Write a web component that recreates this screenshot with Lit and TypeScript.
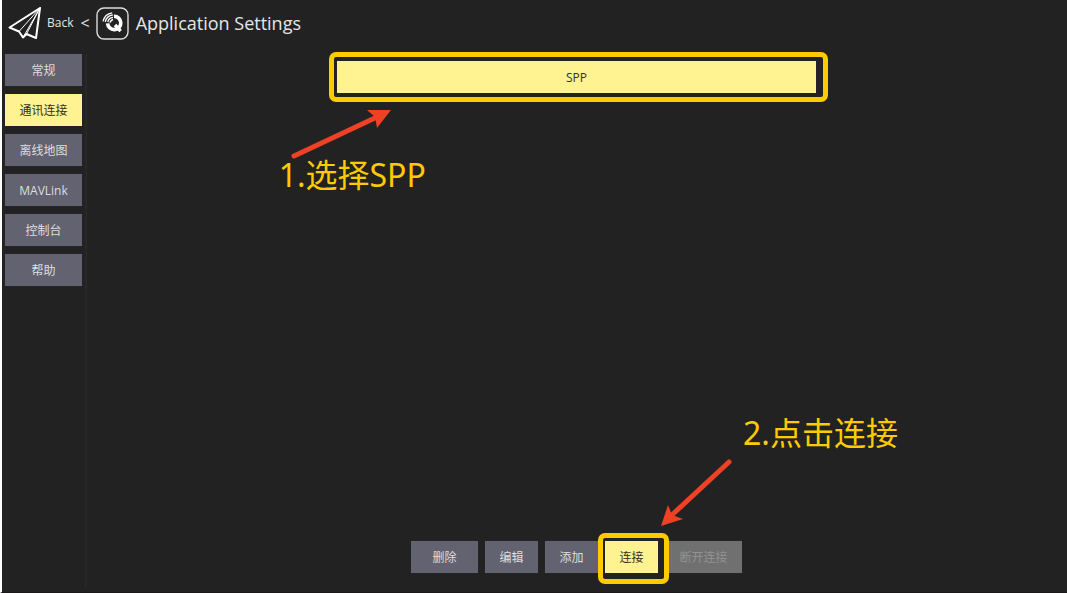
import { LitElement, html, css, svg } from "lit";
import { customElement, state } from "lit/decorators.js";
import { classMap } from "lit/directives/class-map.js";

const PAGES = ["常规", "通讯连接", "离线地图", "MAVLink", "控制台", "帮助"];

const planeIcon = svg`
  <g fill="none" stroke="#fff" stroke-linejoin="round" stroke-linecap="round">
    <path stroke-width="2" d="M32 2 L1.5 21.5 L11 25.5 L15 31.5 L18.5 28 L28 32 Z" />
    <path stroke-width="1" d="M32 2 L11 25.5 M32 2 L15 31.5 M32 2 L18.5 28" />
  </g>`;

const logoIcon = svg`
  <rect x="1" y="1" width="31" height="31" rx="7" fill="none" stroke="#dcdcdc" stroke-width="1.4" />
  <g fill="none" stroke="#fff">
    <path stroke-width="3.6" d="M18 9.4 A6.6 6.6 0 1 1 11.6 16.4" />
    <path stroke-width="3.4" d="M19 18 L24.6 24.2" />
    <path stroke-width="1.3" d="M11.8 15 A6 6 0 0 1 17 10.4 M9.3 14.8 A8.6 8.6 0 0 1 16.8 8 M7 14.4 A11 11 0 0 1 16.2 5.8" />
    <path stroke-width="1.6" d="M14 15.6 A4.4 4.4 0 0 1 17 12.6" />
  </g>`;

@customElement("app-root")
export class AppRoot extends LitElement {
  static styles = css`
    :host {
      display: block;
      font-family: "Open Sans", "Noto Sans CJK SC", sans-serif;
      color: #e6e6e6;
    }
    .window {
      box-sizing: border-box;
      min-height: 100vh;
      display: flex;
      flex-direction: column;
      background: #222;
      border-left: 2px solid #fff;
      border-bottom: 1px solid #1a1819;
      overflow: hidden;
    }
    .toolbar {
      display: flex;
      align-items: center;
      height: 46px;
      padding-left: 6px;
    }
    .back {
      display: flex;
      align-items: center;
      gap: 5px;
      padding: 0;
      border: 0;
      background: none;
      color: inherit;
      font: 12px/16px "Open Sans", sans-serif;
    }
    .chevron {
      font-size: 16px;
      margin: 0 6px 0 2px;
    }
    .title {
      margin: 0 0 0 7px;
      font-size: 18px;
      line-height: 24px;
      font-weight: 400;
    }
    .plane {
      width: 34px;
      height: 34px;
    }
    .logo {
      width: 33px;
      height: 33px;
    }
    .body {
      flex: 1;
      display: flex;
      padding-top: 8px;
    }
    .pages {
      display: flex;
      flex-direction: column;
      gap: 8px;
      width: 77px;
      padding: 0 3px;
      border-right: 2px solid #282828;
      margin-bottom: 5px;
    }
    .btn {
      box-sizing: border-box;
      height: 32px;
      padding: 2px 0 0;
      border: 0;
      background: #636270;
      color: #dededf;
      font: 12px/16px "Open Sans", "Noto Sans CJK SC", sans-serif;
      box-shadow: 0 0 1px #303036;
    }
    .btn.active {
      background: #fff291;
      color: #33301f;
    }
    .btn:disabled {
      background: #707070;
      color: #929292;
    }
    .main {
      flex: 1;
      display: flex;
      flex-direction: column;
      align-items: center;
      justify-content: space-between;
      padding: 7px 1px 19px 0;
    }
    .marked {
      position: relative;
      display: flex;
    }
    .link {
      width: 49%;
    }
    .marked .btn {
      flex: 1;
    }
    .marked::after {
      content: "";
      position: absolute;
      border: 5px solid #ffca00;
      border-radius: 7px;
      pointer-events: none;
    }
    .link::after {
      inset: -9px -12px -9px -8px;
    }
    .connect::after {
      inset: -8px -11px -11px -7px;
      z-index: 1;
    }
    .actions {
      display: flex;
      gap: 7px;
    }
    .w53 {
      width: 53px;
    }
    .w67 {
      width: 67px;
    }
    .w77 {
      width: 77px;
    }
    .note {
      position: absolute;
      margin: 0;
      color: #ffca00;
      font-family: "Noto Sans", "Noto Sans CJK SC", sans-serif;
      font-size: 32px;
      line-height: 40px;
      white-space: nowrap;
    }
    .arrow {
      position: absolute;
      overflow: visible;
      pointer-events: none;
    }
    .note-link {
      left: -58px;
      top: 94px;
    }
    .arrow-link {
      left: -46px;
      top: 49px;
      width: 100px;
      height: 50px;
    }
    .note-connect {
      left: 138px;
      top: -128px;
    }
    .arrow-connect {
      left: 56px;
      top: -82px;
      width: 72px;
      height: 68px;
    }
  `;

  @state() private page = "通讯连接";

  private pageButton(name: string) {
    const active = name === this.page;
    return html`<button
      class=${classMap({ btn: true, active })}
      @click=${() => (this.page = name)}
    >${name}</button>`;
  }

  render() {
    return html`
      <div class="window">
        <header class="toolbar">
          <button class="back">
            <svg class="plane" viewBox="0 0 34 34" aria-hidden="true">${planeIcon}</svg>
            <span>Back</span>
            <span class="chevron">&lt;</span>
          </button>
          <svg class="logo" viewBox="0 0 33 33" aria-hidden="true">${logoIcon}</svg>
          <h1 class="title">Application Settings</h1>
        </header>
        <div class="body">
          <nav class="pages">${PAGES.map((name) => this.pageButton(name))}</nav>
          <main class="main">
            <div class="marked link">
              <button class="btn active">SPP</button>
              <svg class="arrow arrow-link" viewBox="0 0 100 50" aria-hidden="true">
                <path d="M3 46 L86 7" stroke="#ee4126" stroke-width="5" stroke-linecap="round" />
                <path d="M100 0 L76 0 L84 7 L86 18 Z" fill="#ee4126" />
              </svg>
              <p class="note note-link">1.选择SPP</p>
            </div>
            <div class="actions">
              <button class="btn w67">删除</button>
              <button class="btn w53">编辑</button>
              <button class="btn w53">添加</button>
              <div class="marked connect w53">
                <button class="btn active">连接</button>
                <svg class="arrow arrow-connect" viewBox="0 0 72 68" aria-hidden="true">
                  <path d="M68 3 L12 55" stroke="#ee4126" stroke-width="5" stroke-linecap="round" />
                  <path d="M0 67 L7 46 L11 56 L22 60 Z" fill="#ee4126" />
                </svg>
                <p class="note note-connect">2.点击连接</p>
              </div>
              <button class="btn w77" disabled>断开连接</button>
            </div>
          </main>
        </div>
      </div>
    `;
  }
}
